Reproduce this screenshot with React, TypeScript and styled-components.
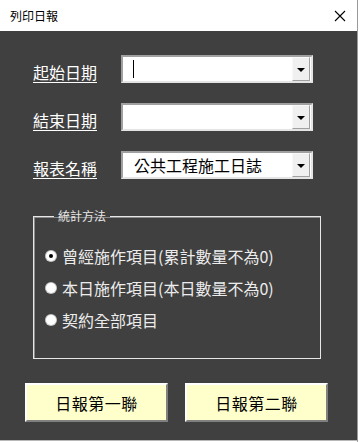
import React from "react"
import styled, { createGlobalStyle } from 'styled-components'

const GlobalStyle = createGlobalStyle`
  html, body {
    margin: 0;
    padding: 0;
    background: #ffffff;
    font-family: "Noto Sans CJK TC", "Noto Sans", sans-serif;
  }
`

const Screen = styled.div`
  width: 360px;
  height: 442px;
  display: flex;
  overflow: hidden;
  background: #ffffff;
`

const Window = styled.div`
  width: 357px;
  height: 440px;
  display: flex;
  flex-direction: column;
  background: #404040;
  border-bottom: 1px solid #b8b8b8;
`

const TitleBar = styled.div`
  height: 31px;
  flex: none;
  background: #ffffff;
  display: flex;
  align-items: center;
  justify-content: space-between;
  padding: 0 8px 0 10px;
  font-size: 12px;
  color: #000000;
`

const CloseIcon = styled.svg`
  width: 12px;
  height: 12px;
  margin-right: 3px;
`

const Body = styled.div`
  flex: 1;
  display: flex;
  flex-direction: column;
  padding: 24px 0 0 0;
`

const Form = styled.div`
  display: grid;
  grid-template-columns: 88px 192px;
  row-gap: 20px;
  padding-left: 33px;
`

const Label = styled.div`
  height: 28px;
  display: flex;
  align-items: center;
  padding-top: 6px;
  box-sizing: border-box;
  font-size: 16px;
  color: #ffffff;
  text-decoration: underline;
  text-underline-offset: 3px;
`

const Combo = styled.div`
  height: 28px;
  box-sizing: border-box;
  background: #ffffff;
  border-top: 2px solid #a0a0a0;
  border-left: 2px solid #a0a0a0;
  border-bottom: 2px solid #e4e4e4;
  border-right: 2px solid #e4e4e4;
  display: flex;
  align-items: center;
`

const ComboText = styled.div`
  flex: 1;
  padding-left: 11px;
  font-size: 16px;
  color: #000000;
  white-space: nowrap;
`

const Caret = styled.div`
  width: 1px;
  height: 18px;
  margin-left: 10px;
  background: #000000;
`

const DropButton = styled.div`
  width: 16px;
  height: 22px;
  margin-right: 1px;
  background: #f0f0f0;
  border-top: 1px solid #f8f8f8;
  border-left: 1px solid #f8f8f8;
  border-right: 1px solid #a0a0a0;
  border-bottom: 1px solid #a0a0a0;
  display: flex;
  align-items: center;
  justify-content: center;
  margin-left: auto;
`

const Arrow = styled.div`
  width: 0;
  height: 0;
  border-left: 4px solid transparent;
  border-right: 4px solid transparent;
  border-top: 4px solid #000000;
  margin-top: 1px;
`

const Group = styled.fieldset`
  margin: 29px 0 0 33px;
  width: 288px;
  height: 151px;
  box-sizing: border-box;
  padding: 0 0 0 12px;
  border: 1px solid #e6e6e6;
  box-shadow: inset 1px 1px 0 #8a8a8a;
  display: flex;
  flex-direction: column;
`

const Legend = styled.legend`
  padding: 0 4px;
  margin-left: 8px;
  font-size: 12px;
  line-height: 16px;
  color: #e8e8e8;
`

const Options = styled.div`
  display: flex;
  flex-direction: column;
  gap: 10px;
  padding-top: 21px;
`

const Option = styled.div`
  display: flex;
  align-items: center;
  gap: 6px;
  height: 22px;
  font-size: 16px;
  color: #ececec;
  white-space: nowrap;
`

const RadioDot = styled.div<{ checked?: boolean }>`
  width: 10px;
  height: 10px;
  border-radius: 50%;
  background: #ffffff;
  box-shadow: 0 0 0 1px #c8c8c8;
  display: flex;
  align-items: center;
  justify-content: center;
  &::after {
    content: "";
    width: 4px;
    height: 4px;
    border-radius: 50%;
    background: ${(props) => (props.checked ? '#000000' : 'transparent')};
  }
`

const ButtonRow = styled.div`
  display: flex;
  gap: 17px;
  padding: 24px 0 0 25px;
`

const Button = styled.div`
  width: 143px;
  height: 39px;
  box-sizing: border-box;
  background: #ffffcc;
  border-top: 2px solid #ffffff;
  border-left: 2px solid #ffffff;
  border-right: 2px solid #808080;
  border-bottom: 2px solid #808080;
  display: flex;
  align-items: center;
  justify-content: center;
  font-size: 16px;
  color: #000000;
  letter-spacing: 0.5px;
`

const Edge = styled.div`
  flex: 1;
  background: #ffffff;
  border-left: 1px solid #9a9a9a;
`

const options = [
  { text: '曾經施作項目(累計數量不為0)', checked: true },
  { text: '本日施作項目(本日數量不為0)', checked: false },
  { text: '契約全部項目', checked: false },
]

const App: React.FC = () => {
  return (
    <Screen>
      <GlobalStyle />
      <Window>
        <TitleBar>
          <span>列印日報</span>
          <CloseIcon viewBox="0 0 12 12">
            <path d="M1 1 L11 11 M11 1 L1 11" stroke="#000" strokeWidth="1.1" fill="none" />
          </CloseIcon>
        </TitleBar>
        <Body>
          <Form>
            <Label>起始日期</Label>
            <Combo>
              <Caret />
              <DropButton><Arrow /></DropButton>
            </Combo>
            <Label>結束日期</Label>
            <Combo>
              <DropButton><Arrow /></DropButton>
            </Combo>
            <Label>報表名稱</Label>
            <Combo>
              <ComboText>公共工程施工日誌</ComboText>
              <DropButton><Arrow /></DropButton>
            </Combo>
          </Form>
          <Group>
            <Legend>統計方法</Legend>
            <Options>
              {options.map((o) => (
                <Option key={o.text}>
                  <RadioDot checked={o.checked} />
                  {o.text}
                </Option>
              ))}
            </Options>
          </Group>
          <ButtonRow>
            <Button>日報第一聯</Button>
            <Button>日報第二聯</Button>
          </ButtonRow>
        </Body>
      </Window>
      <Edge />
    </Screen>
  )
}

export default App
